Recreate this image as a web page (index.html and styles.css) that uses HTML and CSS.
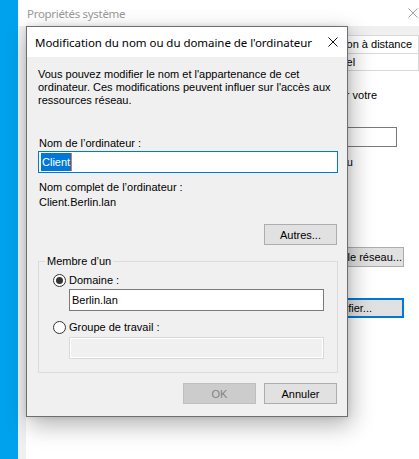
FILE: index.html
```html
<!DOCTYPE html>
<html lang="fr">
<head>
<meta charset="utf-8">
<title>Modification du nom ou du domaine de l'ordinateur</title>
<link rel="stylesheet" href="styles.css">
</head>
<body>
<div class="desk"></div>
<div class="syswin">
  <div class="sys-title">
    <span>Propriétés système</span>
    <svg class="sys-close" width="10" height="10" viewBox="0 0 10 10"><path d="M0.5 0.5 L9.5 9.5 M9.5 0.5 L0.5 9.5" stroke="#a0a0a0" stroke-width="1" fill="none"/></svg>
  </div>
  <div class="sys-body">
    <div class="tabrow r1">
      <div class="tab t-lead"></div>
      <div class="tab t-remote">Utilisation à distance</div>
    </div>
    <div class="tabrow r2">
      <div class="tab t-name"></div>
      <div class="tab t-hw">Matériel</div>
    </div>
    <div class="page">
      <p class="desc">pour votre</p>
      <div class="field"></div>
      <p class="desc2">ou</p>
      <button class="sysbtn netid">le réseau...</button>
      <button class="sysbtn focus">Modifier...</button>
    </div>
  </div>
</div>

<div class="dlg">
  <div class="dlg-title">
    <span>Modification du nom ou du domaine de l'ordinateur</span>
    <svg class="dlg-close" width="10" height="10" viewBox="0 0 10 10"><path d="M0.5 0.5 L9.5 9.5 M9.5 0.5 L0.5 9.5" stroke="#111" stroke-width="1" fill="none"/></svg>
  </div>
  <div class="dlg-body">
    <p class="intro">Vous pouvez modifier le nom et l'appartenance de cet<br>ordinateur. Ces modifications peuvent influer sur l'accès aux<br>ressources réseau.</p>
    <div class="lbl">Nom de l’ordinateur :</div>
    <div class="inp focus"><span class="sel">Client</span><span class="caret"></span></div>
    <div class="info">
      <div>Nom complet de l’ordinateur :</div>
      <div>Client.Berlin.lan</div>
    </div>
    <div class="row-end"><button class="btn">Autres...</button></div>
    <fieldset class="grp">
      <legend>Membre d’un</legend>
      <div class="radio first"><span class="dot on"></span>Domaine :</div>
      <div class="inp sub">Berlin.lan</div>
      <div class="radio second"><span class="dot"></span>Groupe de travail :</div>
      <div class="inp sub dis"></div>
    </fieldset>
    <div class="actions">
      <button class="btn dis">OK</button>
      <button class="btn">Annuler</button>
    </div>
  </div>
</div>
</body>
</html>
```

FILE: styles.css
```css
* { box-sizing: border-box; }
html, body { margin: 0; height: 100%; }
body {
  display: flex;
  overflow: hidden;
  background: #fff;
  font-family: "Liberation Sans", Arial, sans-serif;
  font-size: 11px;
  color: #000;
  position: relative;
}
p { margin: 0; }

.desk { width: 18px; flex: none; background: #00a2ed; }

.syswin { flex: 1; min-width: 0; display: flex; flex-direction: column; }
.sys-title {
  height: 26px; flex: none; background: #fff;
  display: flex; align-items: center; justify-content: space-between;
  padding-left: 9px; padding-right: 1px;
  color: #999; font-family: "Noto Sans", sans-serif; font-size: 11.5px;
  letter-spacing: -0.3px;
}
.sys-body {
  flex: 1; background: #f0f0f0;
  padding: 9px 0 0 8px;
  display: flex; flex-direction: column;
}
.tabrow { display: flex; flex: none; }
.tab {
  height: 18px; line-height: 16px;
  border: 1px solid #d9d9d9; background: #fff;
  white-space: nowrap; overflow: hidden;
}
.r1 .tab { height: 19px; line-height: 17px; }
.r2 .tab { border-top: none; height: 17px; line-height: 16px; }
.t-lead { width: 274px; }
.t-remote { flex: 1; text-align: right; padding-right: 6px; }
.t-name { width: 274px; }
.t-hw { flex: 1; padding-left: 15px; }

.page {
  flex: 1; background: #fff;
  display: flex; flex-direction: column; align-items: flex-end;
  padding: 18px 15px 0 0;
}
.desc { line-height: 13px; margin-right: 27px; white-space: nowrap; }
.field { width: 250px; height: 20px; border: 1px solid #7a7a7a; margin: 25px 7px 0 0; }
.desc2 { line-height: 13px; margin: 9px 51px 0 0; white-space: nowrap; }
.sysbtn {
  font: inherit; color: #000;
  width: 114px; height: 20px; padding: 0;
  background: #e1e1e1; border: 1px solid #adadad;
  margin-top: 78px;
  text-align: right;
}
.sysbtn.netid { padding-right: 1px; }
.sysbtn.focus { border: 2px solid #0078d7; margin-top: 31px; padding-right: 30px; }

.dlg {
  position: absolute; left: 26px; top: 26px;
  width: 322px; height: 391px;
  border: 1px solid #6e6e6e;
  background: #f0f0f0;
  box-shadow: 3px 8px 22px rgba(0,0,0,0.30), 0 0 6px rgba(0,0,0,0.10);
  display: flex; flex-direction: column;
}
.dlg-title {
  height: 30px; flex: none; background: #fff;
  display: flex; align-items: center; justify-content: space-between;
  padding: 0 9px 0 8px;
  font-family: "Noto Sans", sans-serif; font-size: 11.5px; color: #000;
  letter-spacing: -0.05px;
  white-space: nowrap;
}
.dlg-body { flex: 1; padding: 11px 9px 0 11px; }
.intro { line-height: 13px; }
.lbl { line-height: 13px; margin-top: 30px; padding-left: 1px; }
.inp {
  height: 22px; background: #fff;
  border: 1px solid #7a7a7a;
  display: flex; align-items: center;
  padding-left: 2px;
}
.inp.focus { border-color: #0078d7; margin-top: 1px; }
.sel { background: #0078d7; color: #fff; height: 18px; line-height: 18px; padding: 0 1px; }
.caret { width: 1px; height: 18px; background: #e8704a; }
.info { margin-top: 7px; line-height: 15px; padding-left: 1px; }
.row-end { display: flex; justify-content: flex-end; margin-top: 14px; padding-right: 1px; }
.btn {
  font: inherit; color: #000;
  width: 73px; height: 21px; padding: 0;
  background: #e1e1e1; border: 1px solid #adadad;
}
.btn.dis { background: #cccccc; border-color: #bfbfbf; color: #838383; }

.grp {
  margin: 10px 0 0 0;
  border: 1px solid #dcdcdc;
  padding: 0 13px 13px 14px;
  min-width: 0;
}
.grp legend { padding: 0 2px; margin-left: -8px; line-height: 13px; }
.radio { display: flex; align-items: center; height: 14px; line-height: 14px; }
.radio.first { margin-top: 5px; }
.radio.second { margin-top: 9px; }
.dot {
  width: 13px; height: 13px; border-radius: 50%;
  border: 1px solid #333; background: #fff;
  margin-right: 3px;
  display: flex; align-items: center; justify-content: center;
}
.dot.on::after { content: ""; width: 7px; height: 7px; border-radius: 50%; background: #333; }
.inp.sub { margin-left: 16px; margin-top: 2px; }
.inp.dis { margin-top: 3px; background: #f0f0f0; border-color: #d9d9d9; box-shadow: inset 0 0 0 1px #fff; }

.actions { display: flex; justify-content: flex-end; gap: 8px; margin-top: 10px; padding-right: 1px; }
```
